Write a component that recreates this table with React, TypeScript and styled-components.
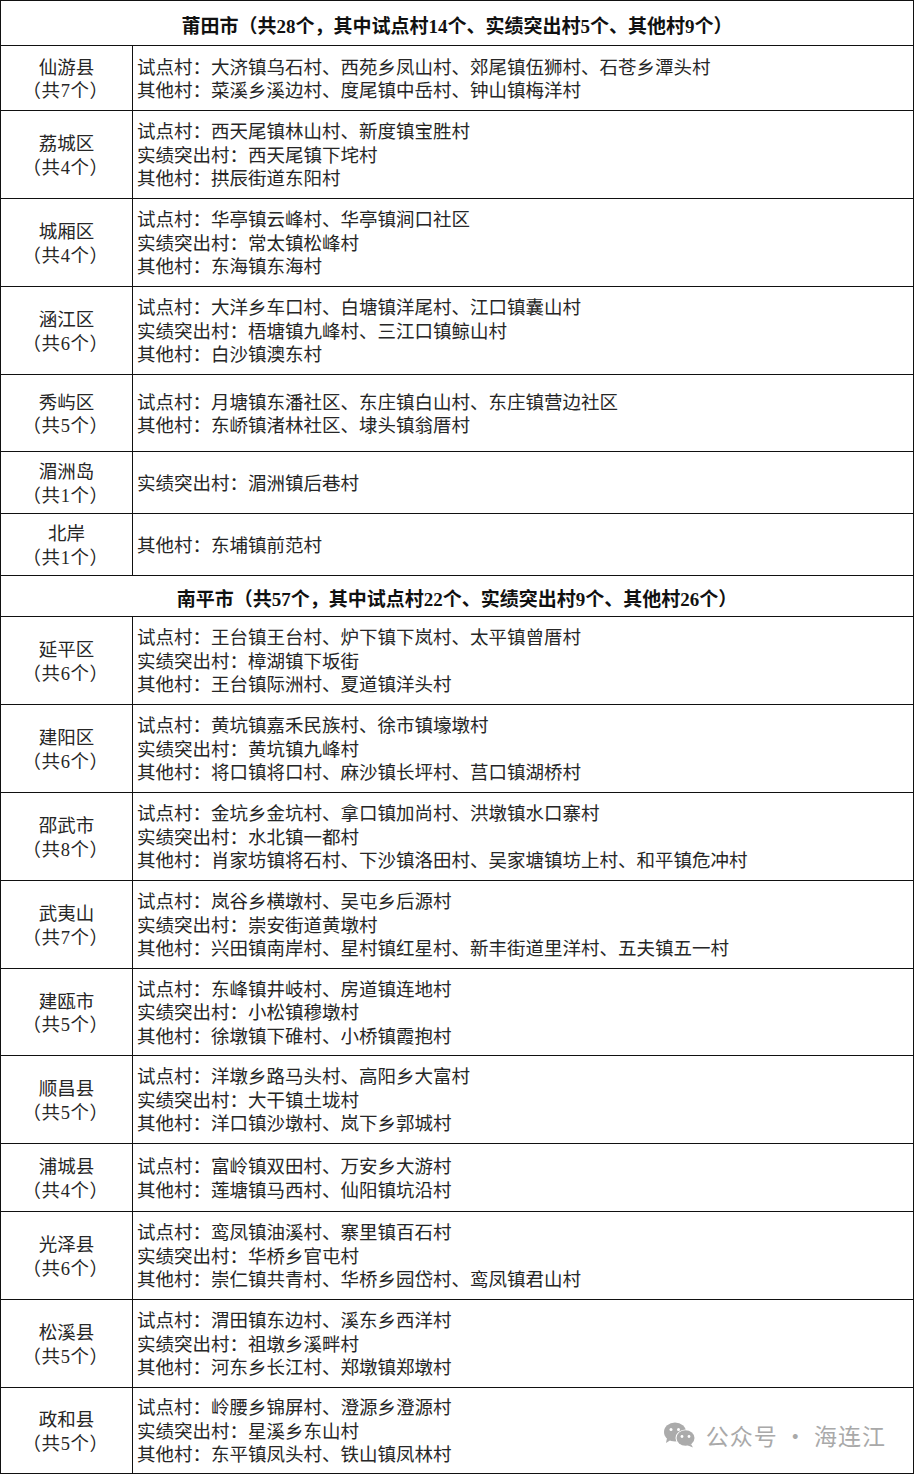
import React from 'react';
import styled, { createGlobalStyle } from 'styled-components';

const GlobalStyle = createGlobalStyle`
  html, body {
    margin: 0;
    padding: 0;
    background: #ffffff;
  }
  body {
    font-family: "Liberation Serif", "Noto Sans CJK SC", serif;
    color: #222222;
  }
`;

type County = {
  name: string;
  count: number;
  height: number;
  lines: string[];
};

type City = {
  title: string;
  height: number;
  counties: County[];
};

const cities: City[] = [
  {
    title: '莆田市（共28个，其中试点村14个、实绩突出村5个、其他村9个）',
    height: 45,
    counties: [
      {
        name: '仙游县',
        count: 7,
        height: 65,
        lines: [
          '试点村：大济镇乌石村、西苑乡凤山村、郊尾镇伍狮村、石苍乡潭头村',
          '其他村：菜溪乡溪边村、度尾镇中岳村、钟山镇梅洋村',
        ],
      },
      {
        name: '荔城区',
        count: 4,
        height: 88,
        lines: ['试点村：西天尾镇林山村、新度镇宝胜村', '实绩突出村：西天尾镇下垞村', '其他村：拱辰街道东阳村'],
      },
      {
        name: '城厢区',
        count: 4,
        height: 88,
        lines: ['试点村：华亭镇云峰村、华亭镇涧口社区', '实绩突出村：常太镇松峰村', '其他村：东海镇东海村'],
      },
      {
        name: '涵江区',
        count: 6,
        height: 88,
        lines: [
          '试点村：大洋乡车口村、白塘镇洋尾村、江口镇囊山村',
          '实绩突出村：梧塘镇九峰村、三江口镇鲸山村',
          '其他村：白沙镇澳东村',
        ],
      },
      {
        name: '秀屿区',
        count: 5,
        height: 77,
        lines: ['试点村：月塘镇东潘社区、东庄镇白山村、东庄镇营边社区', '其他村：东峤镇渚林社区、埭头镇翁厝村'],
      },
      { name: '湄洲岛', count: 1, height: 62, lines: ['实绩突出村：湄洲镇后巷村'] },
      { name: '北岸', count: 1, height: 62, lines: ['其他村：东埔镇前范村'] },
    ],
  },
  {
    title: '南平市（共57个，其中试点村22个、实绩突出村9个、其他村26个）',
    height: 41,
    counties: [
      {
        name: '延平区',
        count: 6,
        height: 88,
        lines: [
          '试点村：王台镇王台村、炉下镇下岚村、太平镇曾厝村',
          '实绩突出村：樟湖镇下坂街',
          '其他村：王台镇际洲村、夏道镇洋头村',
        ],
      },
      {
        name: '建阳区',
        count: 6,
        height: 88,
        lines: [
          '试点村：黄坑镇嘉禾民族村、徐市镇壕墩村',
          '实绩突出村：黄坑镇九峰村',
          '其他村：将口镇将口村、麻沙镇长坪村、莒口镇湖桥村',
        ],
      },
      {
        name: '邵武市',
        count: 8,
        height: 88,
        lines: [
          '试点村：金坑乡金坑村、拿口镇加尚村、洪墩镇水口寨村',
          '实绩突出村：水北镇一都村',
          '其他村：肖家坊镇将石村、下沙镇洛田村、吴家塘镇坊上村、和平镇危冲村',
        ],
      },
      {
        name: '武夷山',
        count: 7,
        height: 88,
        lines: [
          '试点村：岚谷乡横墩村、吴屯乡后源村',
          '实绩突出村：崇安街道黄墩村',
          '其他村：兴田镇南岸村、星村镇红星村、新丰街道里洋村、五夫镇五一村',
        ],
      },
      {
        name: '建瓯市',
        count: 5,
        height: 87,
        lines: ['试点村：东峰镇井岐村、房道镇连地村', '实绩突出村：小松镇穆墩村', '其他村：徐墩镇下碓村、小桥镇霞抱村'],
      },
      {
        name: '顺昌县',
        count: 5,
        height: 88,
        lines: ['试点村：洋墩乡路马头村、高阳乡大富村', '实绩突出村：大干镇土垅村', '其他村：洋口镇沙墩村、岚下乡郭城村'],
      },
      {
        name: '浦城县',
        count: 4,
        height: 68,
        lines: ['试点村：富岭镇双田村、万安乡大游村', '其他村：莲塘镇马西村、仙阳镇坑沿村'],
      },
      {
        name: '光泽县',
        count: 6,
        height: 88,
        lines: [
          '试点村：鸾凤镇油溪村、寨里镇百石村',
          '实绩突出村：华桥乡官屯村',
          '其他村：崇仁镇共青村、华桥乡园岱村、鸾凤镇君山村',
        ],
      },
      {
        name: '松溪县',
        count: 5,
        height: 88,
        lines: ['试点村：渭田镇东边村、溪东乡西洋村', '实绩突出村：祖墩乡溪畔村', '其他村：河东乡长江村、郑墩镇郑墩村'],
      },
      {
        name: '政和县',
        count: 5,
        height: 86,
        lines: ['试点村：岭腰乡锦屏村、澄源乡澄源村', '实绩突出村：星溪乡东山村', '其他村：东平镇凤头村、铁山镇凤林村'],
      },
    ],
  },
];

const Page = styled.div`
  position: relative;
  width: 915px;
`;

const Table = styled.div`
  width: 914px;
  box-sizing: border-box;
  border-top: 1px solid #111;
  border-left: 1px solid #111;
  border-right: 1px solid #111;
`;

const CityRow = styled.div<{ $h: number }>`
  height: ${(p) => p.$h}px;
  box-sizing: border-box;
  border-bottom: 1px solid #111;
  display: flex;
  align-items: center;
  justify-content: center;
  font-size: 19px;
  font-weight: 700;
  color: #111;
  padding-top: 3px;
`;

const CountyRow = styled.div<{ $h: number }>`
  height: ${(p) => p.$h}px;
  box-sizing: border-box;
  border-bottom: 1px solid #111;
  display: grid;
  grid-template-columns: 132px 1fr;
`;

const NameCell = styled.div`
  border-right: 1px solid #111;
  display: flex;
  flex-direction: column;
  align-items: center;
  justify-content: center;
  padding-top: 4px;
  font-size: 18.5px;
  line-height: 23.5px;
  color: #262626;
`;

const Count = styled.span`
  margin-left: -2px;
  letter-spacing: 0.5px;
`;

const ListCell = styled.div`
  display: flex;
  flex-direction: column;
  justify-content: center;
  padding: 4px 0 0 4px;
  font-size: 18.5px;
  line-height: 23.5px;
  color: #262626;
  white-space: nowrap;
`;

const Watermark = styled.div`
  position: absolute;
  right: 29px;
  bottom: 22px;
  display: flex;
  align-items: center;
  gap: 10px;
  font-family: "Noto Sans CJK SC", "Noto Sans", sans-serif;
  font-size: 23px;
  color: #a9a9a9;
  letter-spacing: 1px;
`;

const WeChatIcon = () => (
  <svg width="33" height="26" viewBox="0 0 33 26">
    <ellipse cx="12" cy="10" rx="11" ry="9.5" fill="#ababab" />
    <path d="M4 16 L3 21 L8.5 17.5 Z" fill="#ababab" />
    <circle cx="8" cy="7.5" r="1.5" fill="#fff" />
    <circle cx="15.5" cy="7.5" r="1.5" fill="#fff" />
    <ellipse cx="22.5" cy="16" rx="10" ry="8.6" fill="#fff" />
    <ellipse cx="22.5" cy="16" rx="9" ry="7.8" fill="#ababab" />
    <path d="M28 22 L30 25.5 L24.5 23.3 Z" fill="#ababab" />
    <circle cx="19" cy="14.5" r="1.4" fill="#fff" />
    <circle cx="26" cy="14.5" r="1.4" fill="#fff" />
  </svg>
);

export default function App() {
  return (
    <Page>
      <GlobalStyle />
      <Table>
        {cities.map((city) => (
          <React.Fragment key={city.title}>
            <CityRow $h={city.height}>{city.title}</CityRow>
            {city.counties.map((c) => (
              <CountyRow key={c.name} $h={c.height}>
                <NameCell>
                  <span>{c.name}</span>
                  <Count>（共{c.count}个）</Count>
                </NameCell>
                <ListCell>
                  {c.lines.map((line) => (
                    <span key={line}>{line}</span>
                  ))}
                </ListCell>
              </CountyRow>
            ))}
          </React.Fragment>
        ))}
      </Table>
      <Watermark>
        <WeChatIcon />
        <span>公众号 · 海连江</span>
      </Watermark>
    </Page>
  );
}
